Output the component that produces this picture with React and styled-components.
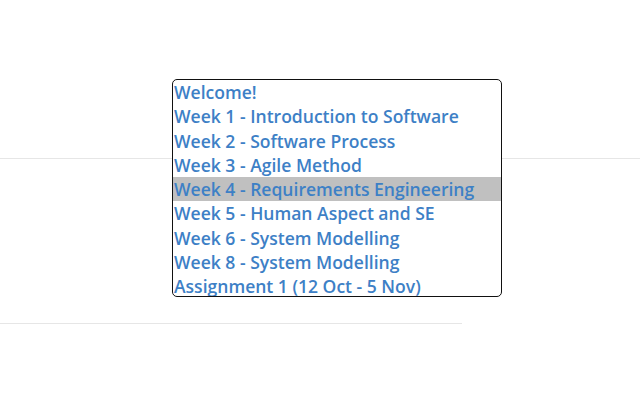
import React from "react";
import styled, { createGlobalStyle } from "styled-components";

const Global = createGlobalStyle`
  html, body { margin: 0; padding: 0; background: #fff; }
  body { font-family: "Open Sans", "Liberation Sans", sans-serif; }
`;

const Page = styled.div`
  position: relative;
  width: 640px;
  height: 400px;
  overflow: hidden;
  padding-top: 158px;
  box-sizing: border-box;
`;

const Rule = styled.div`
  height: 1px;
  background: #e6e6e6;
  width: ${(p) => p.$w}px;
  margin-bottom: ${(p) => p.$mb || 0}px;
`;

const List = styled.ul`
  position: absolute;
  left: 172px;
  top: 79px;
  width: 330px;
  height: 218px;
  box-sizing: border-box;
  margin: 0;
  padding: 0;
  list-style: none;
  border: 1px solid #111;
  border-radius: 5px;
  background: #fff;
  overflow: hidden;
`;

const Item = styled.li`
  height: 24.3px;
  line-height: 25px;
  padding-left: 1px;
  font-size: 17.55px;
  font-weight: 600;
  color: #3d80c6;
  white-space: nowrap;
  background: ${(p) => (p.$active ? "#c0c0c0" : "transparent")};
`;

const items = [
  "Welcome!",
  "Week 1 - Introduction to Software",
  "Week 2 - Software Process",
  "Week 3 - Agile Method",
  "Week 4 - Requirements Engineering",
  "Week 5 - Human Aspect and SE",
  "Week 6 - System Modelling",
  "Week 8 - System Modelling",
  "Assignment 1 (12 Oct - 5 Nov)",
];

export default function App() {
  return (
    <>
      <Global />
      <Page>
        <Rule $w={640} $mb={164} />
        <Rule $w={462} />
        <List>
          {items.map((t, i) => (
            <Item key={t} $active={i === 4}>
              {t}
            </Item>
          ))}
        </List>
      </Page>
    </>
  );
}
